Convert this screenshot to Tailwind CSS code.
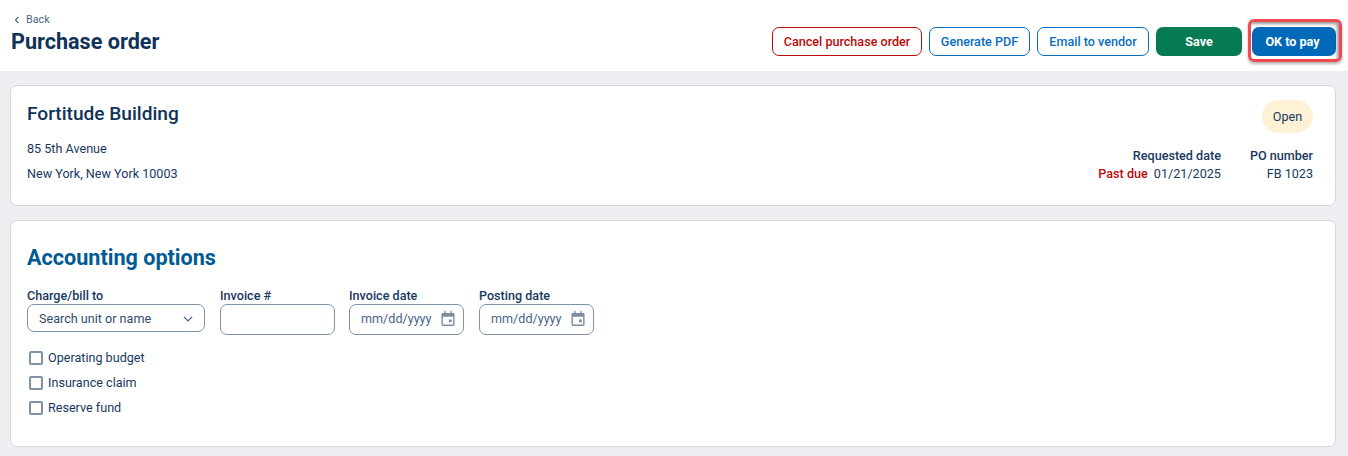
<!DOCTYPE html>
<html lang="en">

<head>
    <meta charset="UTF-8">
    <title>Purchase order</title>
    <script src="https://cdn.jsdelivr.net/npm/@tailwindcss/browser@4"></script>
</head>

<body class="bg-[#eeeff3] font-['Roboto',sans-serif] text-[#18395f] text-[12.6px] leading-[18px] overflow-hidden h-[456px]">
    <header class="h-[71px] bg-white flex justify-between pl-[11px] pr-[12px]">
        <div class="pt-[12px]">
            <a class="flex items-center h-[16px] pl-[3px] gap-[6px] text-[10.8px] text-[#4a6585]">
                <svg width="6" height="8" viewBox="0 0 6 8" fill="none" stroke="#4a6585" stroke-width="1.2">
                    <path d="M4.500 .8 1.500 4l3 3.200" />
                </svg>
                Back
            </a>
            <h1 class="text-[21.6px] leading-[28px] font-bold text-[#0f3358]">Purchase order</h1>
        </div>
        <div class="flex items-start gap-[7px] pt-[27px]">
            <button class="h-[29px] w-[150px] rounded-[7px] border border-[#b90b0b] text-[#b90b0b] font-medium">Cancel purchase order</button>
            <button class="h-[29px] w-[101px] rounded-[7px] border border-[#0a6ebd] text-[#0a6ebd] font-medium">Generate PDF</button>
            <button class="h-[29px] w-[112px] rounded-[7px] border border-[#0a6ebd] text-[#0a6ebd] font-medium">Email to vendor</button>
            <button class="h-[29px] w-[86px] rounded-[7px] bg-[#067a50] text-white font-bold">Save</button>
            <div class="relative ml-[3px]">
                <button class="h-[29px] w-[84px] block rounded-[7px] bg-[#0069b8] text-white font-bold pr-[3px]">OK to pay</button>
                <span class="absolute -left-[4px] -top-[8px] w-[94px] h-[43px] rounded-[6px] border-[3px] border-[#f04a50] shadow-[inset_-2px_2px_3px_rgba(0,0,0,0.4),0_2px_3px_rgba(0,0,0,0.3)]"></span>
            </div>
        </div>
    </header>

    <main class="px-[10px] pr-[12px] pt-[14px] flex flex-col gap-[14px]">
        <section class="h-[121px] bg-white border border-[#d5d7de] rounded-[7px] pl-[16px] pr-[22px] flex justify-between">
            <div class="pt-[16px]">
                <h2 class="text-[19.1px] leading-[24px] font-medium text-[#0f3358]">Fortitude Building</h2>
                <p class="mt-[14px]">85 5th Avenue</p>
                <p class="mt-[7px]">New York, New York 10003</p>
            </div>
            <div class="pt-[14px] flex flex-col items-end">
                <span class="h-[33px] w-[51px] rounded-full bg-[#fdf2d6] flex items-center justify-center">Open</span>
                <div class="flex gap-[29px] mt-[14px] text-right">
                    <div>
                        <div class="font-medium h-[18px]">Requested date</div>
                        <div><span class="text-[#b90b0b] font-medium mr-[3px]">Past due</span> 01/21/2025</div>
                    </div>
                    <div>
                        <div class="font-medium h-[18px]">PO number</div>
                        <div>FB 1023</div>
                    </div>
                </div>
            </div>
        </section>

        <section class="h-[227px] bg-white border border-[#d5d7de] rounded-[7px] pl-[16px] pt-[22px]">
            <h2 class="text-[21.6px] leading-[30px] font-bold text-[#005b94]">Accounting options</h2>
            <div class="flex gap-[15px] mt-[14px] items-start">
                <div class="w-[178px]">
                    <label class="block font-medium h-[17px]">Charge/bill to</label>
                    <div class="h-[28px] border border-[#7e93a8] rounded-[7px] flex items-center justify-between pl-[11px] pr-[11px] pt-[2px] text-[#2f4b6b]">
                        Search unit or name
                        <svg width="10" height="6" viewBox="0 0 10 6" fill="none" stroke="#4a6585" stroke-width="1.2">
                            <path d="M.8 .8 5 5 9.200 .8" />
                        </svg>
                    </div>
                </div>
                <div class="w-[115px]">
                    <label class="block font-medium h-[17px]">Invoice #</label>
                    <div class="h-[31px] border border-[#7e93a8] rounded-[7px]"></div>
                </div>
                <div class="w-[115px] -ml-[1px]">
                    <label class="block font-medium h-[17px]">Invoice date</label>
                    <div class="h-[31px] border border-[#7e93a8] rounded-[7px] flex items-center justify-between pl-[11px] pr-[8px] pb-[2px] text-[#4a6585]">
                        mm/dd/yyyy
                        <svg class="-mt-[1px]" width="14" height="15" viewBox="0 0 14 16" fill="#7b8ea2">
                            <path d="M3 0h1.500v2h5V0H11v2h1.500A1.500 1.500 0 0 1 14 3.500v11a1.500 1.500 0 0 1-1.500 1.500h-11A1.500 1.500 0 0 1 0 14.500v-11A1.500 1.500 0 0 1 1.500 2H3V0Zm-1.500 6v8.500h11V6h-11Zm6.500 3h3v3H8V9Z" />
                        </svg>
                    </div>
                </div>
                <div class="w-[115px]">
                    <label class="block font-medium h-[17px]">Posting date</label>
                    <div class="h-[31px] border border-[#7e93a8] rounded-[7px] flex items-center justify-between pl-[11px] pr-[8px] pb-[2px] text-[#4a6585]">
                        mm/dd/yyyy
                        <svg class="-mt-[1px]" width="14" height="15" viewBox="0 0 14 16" fill="#7b8ea2">
                            <path d="M3 0h1.500v2h5V0H11v2h1.500A1.500 1.500 0 0 1 14 3.500v11a1.500 1.500 0 0 1-1.500 1.500h-11A1.500 1.500 0 0 1 0 14.500v-11A1.500 1.500 0 0 1 1.500 2H3V0Zm-1.500 6v8.500h11V6h-11Zm6.500 3h3v3H8V9Z" />
                        </svg>
                    </div>
                </div>
            </div>
            <div class="mt-[14px] pl-[2px] flex flex-col gap-[7px]">
                <label class="flex items-center gap-[5px] h-[18px]"><span class="w-[14px] h-[14px] border-2 border-[#7e93a8] rounded-[2px]"></span>Operating budget</label>
                <label class="flex items-center gap-[5px] h-[18px]"><span class="w-[14px] h-[14px] border-2 border-[#7e93a8] rounded-[2px]"></span>Insurance claim</label>
                <label class="flex items-center gap-[5px] h-[18px]"><span class="w-[14px] h-[14px] border-2 border-[#7e93a8] rounded-[2px]"></span>Reserve fund</label>
            </div>
        </section>
    </main>
</body>

</html>
